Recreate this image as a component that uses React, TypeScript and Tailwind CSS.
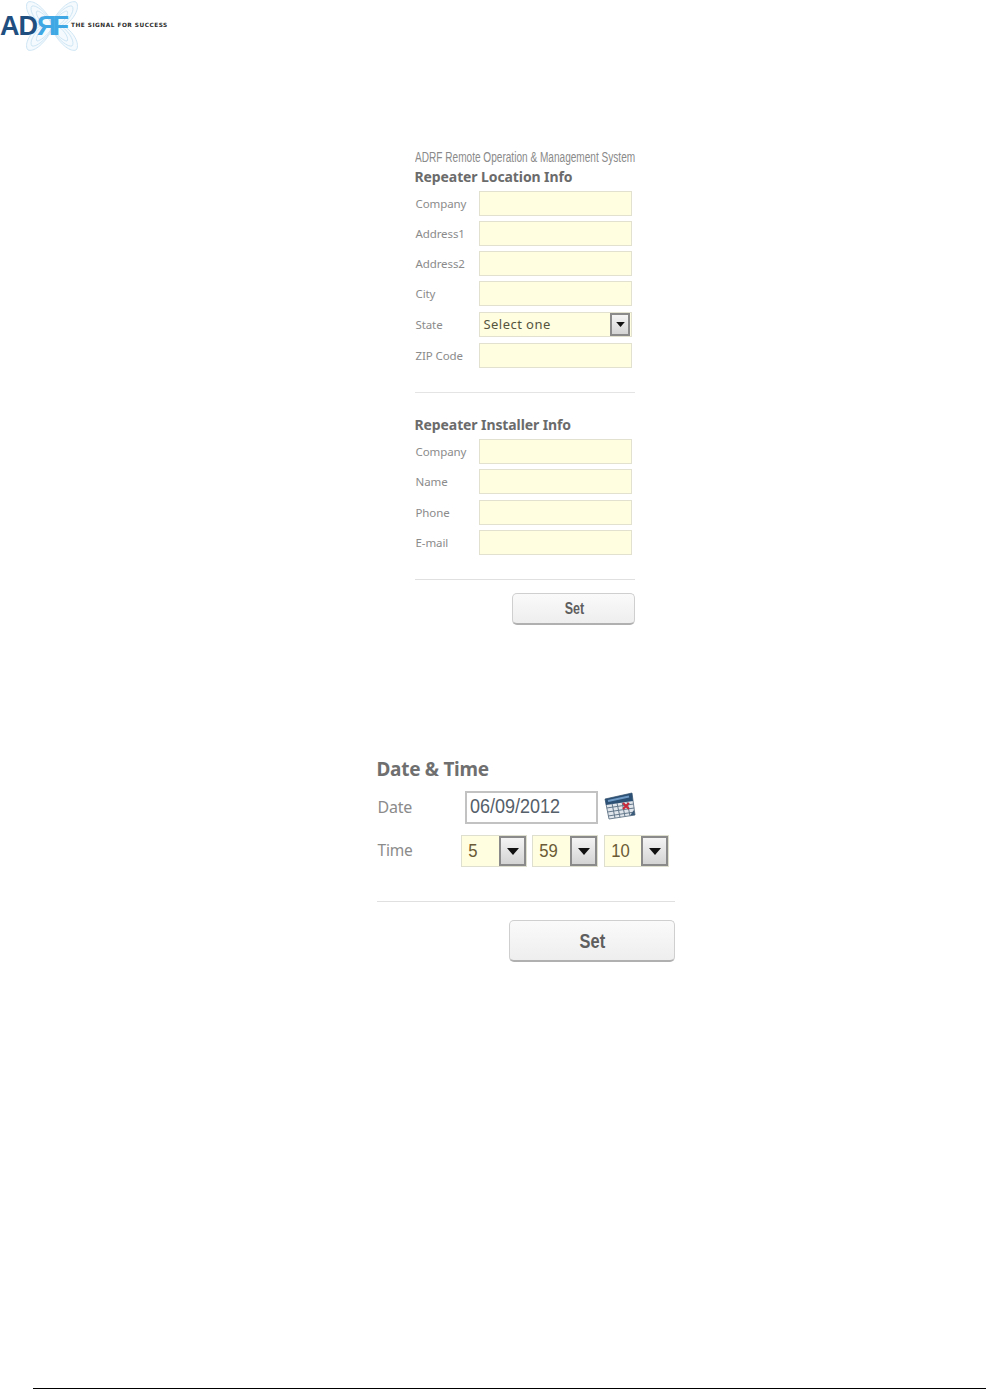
const sans = "font-['Noto_Sans','DejaVu_Sans',sans-serif]";

function Arrow({ large = false }: { large?: boolean }) {
  return (
    <div
      className={
        "flex items-center justify-center border-2 border-[#8a8a8a] bg-gradient-to-b from-[#f4f4f4] to-[#d4d4d4] " +
        (large ? "w-[27px] h-[30px]" : "w-[20px] h-[23px]")
      }
    >
      <svg width={large ? 12 : 9} height={large ? 7 : 5} viewBox="0 0 12 7">
        <path d="M0 0h12L6 7z" fill="#111" />
      </svg>
    </div>
  );
}

function Field({ label, className = "", select }: { label: string; className?: string; select?: boolean }) {
  return (
    <div className={"flex items-center h-[25px] " + className}>
      <div className="w-[64px] pl-[1px] text-[11.5px] tracking-[-0.1px] text-[#8b8b8b] whitespace-nowrap">{label}</div>
      <div className="w-[153.5px] h-[25px] flex items-center justify-between bg-[#fffee0] border border-[#e2e1d0] pr-[1px]">
        {select && <span className="pl-[4px] text-[13px] tracking-[0.45px] text-[#55553f]">Select one</span>}
        {select && <Arrow />}
      </div>
    </div>
  );
}

function SetButton({ large = false }: { large?: boolean }) {
  return (
    <div
      className={
        "flex items-center justify-center rounded-[5px] border border-[#cfcfcf] border-b-2 border-b-[#b0b0b0] bg-gradient-to-b from-[#fafafa] to-[#eeeeee] font-bold text-[#5e5e5e] font-['Liberation_Sans',sans-serif] " +
        (large ? "w-[166px] h-[42px] text-[21px]" : "w-[123px] h-[32px] text-[16px]")
      }
    >
      <span className="inline-block scale-x-[0.78] ml-[2px]">Set</span>
    </div>
  );
}

function TimeSelect({ value, width, className = "" }: { value: string; width: string; className?: string }) {
  return (
    <div className={"flex items-center justify-between h-[32px] bg-[#fffee0] border border-[#dfdfd0] " + width + " " + className}>
      <span className="pl-[7px] text-[18.5px] text-[#6a5a35] font-['Liberation_Sans',sans-serif] inline-block origin-left scale-x-[0.9]">{value}</span>
      <Arrow large />
    </div>
  );
}

function Logo() {
  return (
    <div className="relative w-[170px] h-[52px] shrink-0">
      <svg className="absolute left-[25px] top-0" width="54" height="52" viewBox="0 0 54 52" fill="none" stroke="#cfe6f5" strokeWidth="1">
        <path d="M27 22C18 6 8 0 3 2C-1 6 3 18 15 26C3 34-1 46 3 50C8 52 18 46 27 30C36 46 46 52 51 50C55 46 51 34 39 26C51 18 55 6 51 2C46 0 36 6 27 22Z" fill="#f4fafd" />
        <path d="M27 23C20 11 11 5 7 6C4 9 8 19 18 26C8 33 4 43 7 46C11 47 20 41 27 29C34 41 43 47 47 46C50 43 46 33 36 26C46 19 50 9 47 6C43 5 34 11 27 23Z" />
        <path d="M27 24C22 16 15 11 12 11C10 13 13 20 21 26C13 32 10 39 12 41C15 41 22 36 27 28C32 36 39 41 42 41C44 39 41 32 33 26C41 20 44 13 42 11C39 11 32 16 27 24Z" />
      </svg>
      <div className="absolute left-0 top-[9px] flex items-center font-bold font-['Liberation_Sans',sans-serif] text-[27px] leading-[34px] tracking-[-1px] text-[#1f4e80] whitespace-nowrap">
        <span>AD</span>
        <span className="text-[#3fa7e4] tracking-[-4px]">ЯF</span>
      </div>
      <div className="absolute left-[71px] top-[20px] text-[5.8px] leading-[10px] font-bold tracking-[0.5px] whitespace-nowrap text-[#2a2a2a] font-['DejaVu_Sans',sans-serif]">
        THE SIGNAL FOR SUCCESS
      </div>
    </div>
  );
}

function CalendarIcon() {
  return (
    <svg width="32" height="28" viewBox="0 0 32 28" className="ml-[6px] mt-[1px]">
      <path d="M1 7L28 1L31 23L5 27Z" fill="#dfe5ea" stroke="#4f6478" strokeWidth="0.8" />
      <path d="M1 7L28 1L29 9L2 13Z" fill="#2c4f74" />
      <path d="M4 9L25 4.5" stroke="#6f9bc6" strokeWidth="2" />
      <g stroke="#64788c" strokeWidth="1">
        <path d="M2.7 16L29.6 12M3.4 20L30.2 16M4 24L30.7 20" />
        <path d="M8 11.5L11 26M13 11L16 25.3M18 10L21 24.6M23 9.5L26 23.8" />
      </g>
      <path d="M19 11L25 17M25 11L19 17" stroke="#c8283a" strokeWidth="2.2" />
      <path d="M26 23.5L31 23L30 18" fill="#3a5a7a" />
    </svg>
  );
}

export default function App() {
  return (
    <div className={"w-[986px] h-[1390px] bg-white flex flex-col overflow-hidden " + sans}>
      <Logo />

      <section className="ml-[414.5px] w-[220.5px] mt-[99px]">
        <div className="h-[13px] leading-[13px] text-[14px] whitespace-nowrap text-[#8a8a8a] font-['Liberation_Sans',sans-serif] origin-left scale-x-[0.72]">
          ADRF Remote Operation &amp; Management System
        </div>
        <h2 className="mt-[3px] h-[20px] leading-[20px] text-[14px] font-bold tracking-[-0.1px] text-[#6b6b6b] whitespace-nowrap">
          Repeater Location Info
        </h2>
        <div className="mt-[4px] flex flex-col gap-[5px]">
          <Field label="Company" />
          <Field label="Address1" />
          <Field label="Address2" />
          <Field label="City" />
          <Field label="State" select className="mt-[1px]" />
          <Field label="ZIP Code" className="mt-[1px]" />
        </div>
        <div className="mt-[24px] h-[1px] bg-[#e4e4e4]" />
        <h2 className="mt-[22px] h-[20px] leading-[20px] text-[14px] font-bold tracking-[-0.1px] text-[#6b6b6b] whitespace-nowrap">
          Repeater Installer Info
        </h2>
        <div className="mt-[4px] flex flex-col gap-[5px]">
          <Field label="Company" />
          <Field label="Name" />
          <Field label="Phone" className="mt-[1px]" />
          <Field label="E-mail" />
        </div>
        <div className="mt-[24px] h-[1px] bg-[#e0e0e0]" />
        <div className="mt-[13px] flex justify-end">
          <SetButton />
        </div>
      </section>

      <section className="ml-[376.5px] w-[298px] mt-[133px]">
        <h2 className="h-[22px] leading-[22px] text-[19px] font-bold tracking-[-0.3px] text-[#6f6f6f] whitespace-nowrap">Date &amp; Time</h2>
        <div className="mt-[11px] flex items-start">
          <div className="w-[88.5px] pl-[1px] h-[33px] leading-[33px] text-[16px] tracking-[-0.2px] text-[#8b8b8b]">Date</div>
          <div className="w-[133px] h-[33px] border-2 border-[#c2c2c2] pl-[3px] leading-[27px] text-[20px] text-[#55606a] font-['Liberation_Sans',sans-serif] whitespace-nowrap">
            <span className="inline-block origin-left scale-x-[0.9]">06/09/2012</span>
          </div>
          <CalendarIcon />
        </div>
        <div className="mt-[11px] flex items-center">
          <div className="w-[84.5px] pl-[1px] text-[15.5px] tracking-[-0.2px] text-[#8b8b8b]">Time</div>
          <TimeSelect value="5" width="w-[66px]" />
          <TimeSelect value="59" width="w-[66px]" className="ml-[5px]" />
          <TimeSelect value="10" width="w-[65px]" className="ml-[6px]" />
        </div>
        <div className="mt-[34px] h-[1px] bg-[#e0e0e0]" />
        <div className="mt-[18px] flex justify-end">
          <SetButton large />
        </div>
      </section>

      <div className="mt-auto mb-[1px] ml-[33px] h-[1.5px] bg-black" />
    </div>
  );
}
